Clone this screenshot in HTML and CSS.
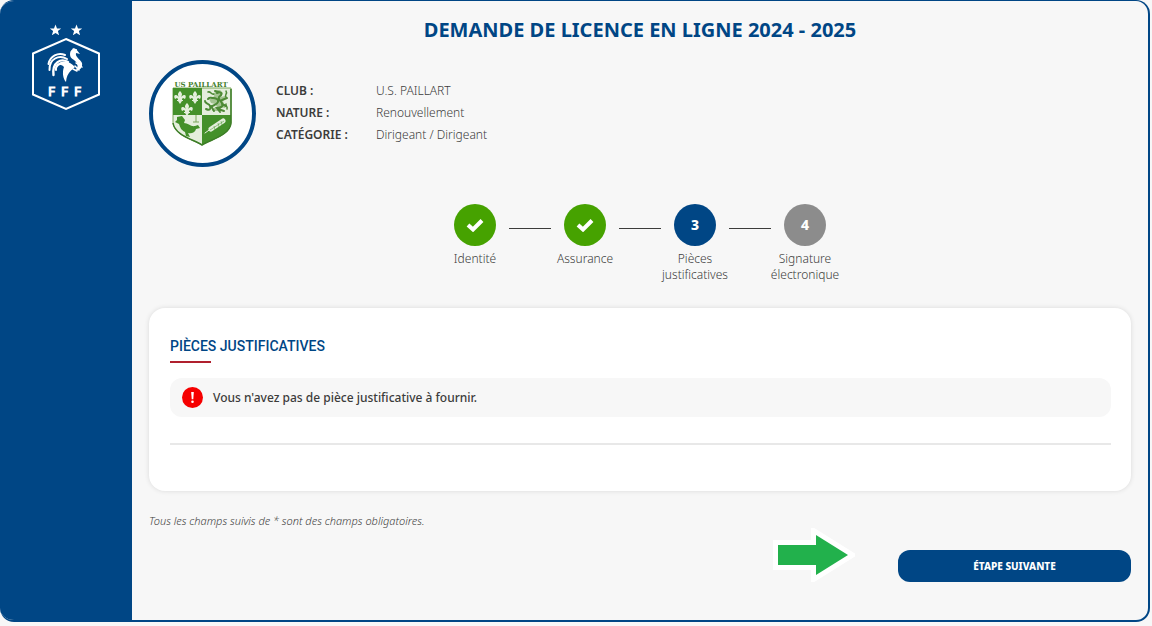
FILE: index.html
```html
<!DOCTYPE html>
<html lang="fr">
<head>
    <meta charset="UTF-8">
    <meta name="viewport" content="width=device-width, initial-scale=1.0">
    <title>Demande de licence en ligne</title>
    <link rel="stylesheet" href="styles.css">
</head>
<body>
<div class="frame">
    <aside class="sidebar">
        <svg class="fff" viewBox="28 22 76 90" role="img" aria-label="FFF">
            <g fill="#fff">
                <path d="M55.500 24.500l1.500 4h4.200l-3.300 2.600 1.200 4.200-3.600-2.400-3.600 2.400 1.200-4.200-3.300-2.600H54z"/>
                <path d="M76.500 24.500l1.500 4h4.200l-3.300 2.600 1.200 4.200-3.600-2.400-3.600 2.400 1.200-4.200-3.300-2.600H75z"/>
            </g>
            <path d="M66 39L99 53.500V94.500L66 109L33 94.500V53.500Z" fill="none" stroke="#fff" stroke-width="2"/>
            <g fill="none" stroke="#fff" stroke-linecap="round">
                <path d="M65 55C58 52 50 56 48.500 64" stroke-width="2"/>
                <path d="M67 59C59 54 49 59 49.500 70" stroke-width="2"/>
                <path d="M68 62C61 58 52 62 53.500 75" stroke-width="2.400"/>
                <path d="M69 64C62 61 55 65 56 70" stroke-width="2"/>
                <path d="M72 53C70 58 77 57 80 63" stroke-width="1.500"/>
                <path d="M75 66L79 70M76 63L82 67M73 69L77 71" stroke-width="1.500"/>
            </g>
            <g fill="#fff">
                <path d="M57 65C62 59 70 61 75 67C72 70 67 72 66 82C63 79 62 72 64 67C61 64 59 65 57 65Z"/>
                <path d="M70 54C70 50 73 48 76 49L80 54L76 53C75 57 80 59 82 63C83 68 79 71 75 71C79 67 78 63 74 60C71 58 70 57 70 54Z"/>
                <path d="M72 49l2-1 1 1 2 0-1 2z"/>
            </g>
            <text class="fff-text" x="48 61 74" y="96">FFF</text>
        </svg>
    </aside>

    <main class="main">
        <h1 class="title">DEMANDE DE LICENCE EN LIGNE 2024 - 2025</h1>

        <section class="club">
            <div class="club-logo">
                <svg viewBox="1 0 66 70" role="img" aria-label="US Paillart">
                    <text class="club-text" x="32" y="8" text-anchor="middle">US PAILLART</text>
                    <path d="M4 9H62V43C62 56 43 60 33 66C23 60 4 56 4 43Z" fill="#e4eedc" stroke="#7ba75b"/>
                    <path d="M4 9H33V36H4Z" fill="#44902a"/>
                    <path d="M33 36H62V43C62 56 43 60 33 66Z" fill="#44902a"/>
                    <path d="M62 10V44C61 56 43 60 33 66C23 60 6 56 4 44" fill="none" stroke="#3d7d27" stroke-width="1.500"/>
                    <g fill="#e4eedc">
                        <path id="lys" d="M11 12c3 3 2 4 1 6 4-4 6-1 4 2-1 0-1-1-2-1-1 1-1 1-1 2h1v1h-1l-2 3-2-3H8v-1h1c0-1 0-1-1-2-1 0-1 1-2 1-2-3 0-6 4-2-1-2-2-3 1-6z"/>
                        <use href="#lys" x="15"/>
                        <use href="#lys" x="7" y="12"/>
                    </g>
                    <path d="M46 12l5-1 3 3-2 4 4-1 2 2-4 3 1 3 3 1-2 3-4-1-3 4-6 0 2-3 3-1-2-3-4-1-2-4 3 0 2-3z" fill="#a3c391"/>
                    <g fill="none" stroke="#4d8a35" stroke-width="2" stroke-linecap="round">
                        <path d="M37 30c4 2 5 0 4-3s-5-2-5-5M42 28c2-2 6-2 7-5s-3-4-5-4M44 19c-3 0-4-1-5 1M48 14c4-2 6 1 3 3s0 4 2 7-1 5-5 5l3 4M53 21l5-2M53 25l4 2M49 30l6 2M42 27l3 5M46 12l4 1"/>
                        <path d="M39 13c3-1 3 3 6 2M57 12c2 3-2 4 0 6M58 30c1-3-2-3-1-5" stroke-width="1.500"/>
                    </g>
                    <path d="M8 38l5-1 3 4-1 3c4 0 7 4 11 3l3-1 2 3-4 1c-1 4-5 5-8 4l2 4-4-1-1-4c-4-2-5-5-6-8l-4-2 2-2z" fill="#44902a"/>
                    <path d="M27 36v7M24 43h6" fill="none" stroke="#7ba75b"/>
                    <g fill="none" stroke="#e4eedc" stroke-linecap="round">
                        <path d="M36 54L43 49"/>
                        <path d="M42 50L54 42" stroke-width="5"/>
                    </g>
                    <path d="M41 51L55 42M45 47l1 4M49 44l1 4M52 42l1 4" stroke="#44902a" stroke-width=".5" fill="none"/>
                </svg>
            </div>
            <dl class="infos">
                <dt>CLUB :</dt>
                <dd>U.S. PAILLART</dd>
                <dt>NATURE :</dt>
                <dd>Renouvellement</dd>
                <dt>CATÉGORIE :</dt>
                <dd>Dirigeant / Dirigeant</dd>
            </dl>
        </section>

        <ol class="steps">
            <li class="step">
                <span class="circle done">
                    <svg width="18" height="14" viewBox="0 0 18 14" aria-hidden="true"><path d="M2 7L7 11.500L16 2.500" fill="none" stroke="#fff" stroke-width="4"/></svg>
                </span>
                <span class="label">Identité</span>
            </li>
            <li class="line" aria-hidden="true"></li>
            <li class="step">
                <span class="circle done">
                    <svg width="18" height="14" viewBox="0 0 18 14" aria-hidden="true"><path d="M2 7L7 11.500L16 2.500" fill="none" stroke="#fff" stroke-width="4"/></svg>
                </span>
                <span class="label">Assurance</span>
            </li>
            <li class="line" aria-hidden="true"></li>
            <li class="step" aria-current="step">
                <span class="circle current">3</span>
                <span class="label">Pièces<br>justificatives</span>
            </li>
            <li class="line" aria-hidden="true"></li>
            <li class="step">
                <span class="circle">4</span>
                <span class="label">Signature<br>électronique</span>
            </li>
        </ol>

        <section class="card">
            <h2 class="card-title">PIÈCES JUSTIFICATIVES</h2>
            <div class="alert">
                <svg width="21" height="21" viewBox="0 0 21 21" aria-hidden="true">
                    <circle cx="10.500" cy="10.500" r="10.500" fill="#f60000"/>
                    <path d="M9.200 5h2.600l-.5 7.200H9.700z" fill="#fff"/>
                    <circle cx="10.500" cy="14.800" r="1.300" fill="#fff"/>
                </svg>
                <p>Vous n'avez pas de pièce justificative à fournir.</p>
            </div>
            <hr class="separator">
        </section>

        <p class="note">Tous les champs suivis de * sont des champs obligatoires.</p>

        <div class="actions">
            <svg class="arrow" width="82" height="54" viewBox="0 0 82 54" aria-hidden="true">
                <path d="M5 17H43V7L75 27L43 47V37H5Z" fill="#fff" stroke="#fff" stroke-width="10"/>
                <path d="M5 17H43V7L75 27L43 47V37H5Z" fill="#22b14c"/>
            </svg>
            <button type="button" class="btn">ÉTAPE SUIVANTE</button>
        </div>
    </main>
</div>
</body>
</html>
```
FILE: styles.css
```css
*{
    box-sizing: border-box;
}
body{
    margin: 0;
    background-color: #f7f7f7;
    color: #3c3c3b;
    font-family: "Noto Sans", "Open Sans", sans-serif;
    font-size: 12px;
    font-weight: 300;
    line-height: 16px;
}
h1, h2, p, dl, dd, ol{
    margin: 0;
    padding: 0;
}
.frame{
    display: flex;
    min-height: calc(100vh - 4px);
    margin-right: 2px;
    border: 2px solid #004685;
    border-width: 1px 2px 2px 0;
    border-radius: 14px;
    background-color: #f7f7f7;
    overflow: hidden;
}
.sidebar{
    flex: 0 0 132px;
    padding-top: 21px;
    background-color: #004685;
    text-align: center;
}
.fff{
    width: 76px;
    height: 90px;
}
.fff-text{
    fill: #fff;
    stroke: #fff;
    stroke-width: 1px;
    font: 13px "DejaVu Sans", sans-serif;
}
.main{
    flex: 1;
    padding: 15px 17px 38px;
}
.title{
    color: #004685;
    font-size: 20px;
    font-weight: 700;
    line-height: 28px;
    text-align: center;
}
.club{
    display: flex;
    align-items: center;
    gap: 20px;
    margin-top: 16px;
}
.club-logo{
    display: flex;
    justify-content: center;
    align-items: center;
    width: 107px;
    height: 107px;
    border: 4px solid #004685;
    border-radius: 50%;
    background-color: #fff;
}
.club-logo svg{
    width: 66px;
    height: 70px;
}
.club-text{
    fill: #44802e;
    font: bold 7px "DejaVu Serif", serif;
}
.infos{
    display: grid;
    grid-template-columns: 100px auto;
    padding-bottom: 2px;
    line-height: 22px;
}
.infos dt{
    font-weight: 600;
}
.steps{
    display: flex;
    justify-content: center;
    margin-top: 37px;
    list-style: none;
}
.step{
    display: flex;
    flex-direction: column;
    align-items: center;
    gap: 5px;
    width: 68px;
}
.circle{
    display: flex;
    justify-content: center;
    align-items: center;
    width: 42px;
    height: 42px;
    border-radius: 50%;
    background-color: #8c8c8c;
    color: #fff;
    font-size: 14px;
    font-weight: 800;
}
.done{
    background-color: #46a200;
}
.current{
    background-color: #004685;
}
.label{
    text-align: center;
    white-space: nowrap;
}
.line{
    width: 42px;
    height: 25px;
    border-bottom: 1px solid #3c3c3b;
}
.card{
    margin-top: 25px;
    padding: 24px 20px 46px 21px;
    border-radius: 16px;
    background-color: #fff;
    box-shadow: 0 0 5px rgba(0, 0, 0, 0.12);
}
.card-title{
    color: #004685;
    font-family: Roboto, "Noto Sans", sans-serif;
    font-size: 14px;
    font-weight: 500;
    line-height: 29px;
}
.card-title::after{
    content: "";
    display: block;
    width: 41px;
    height: 2px;
    background-color: #b0202e;
}
.alert{
    display: flex;
    align-items: center;
    gap: 10px;
    margin-top: 15px;
    padding: 9px 12px;
    border-radius: 12px;
    background-color: #f7f7f7;
    font-weight: 500;
}
.separator{
    height: 2px;
    margin: 26px 0 0;
    border: 0;
    background-color: #e8e8e8;
}
.note{
    margin-top: 23px;
    font-size: 11px;
    font-style: italic;
    line-height: 14px;
}
.actions{
    display: flex;
    justify-content: flex-end;
    align-items: flex-end;
    gap: 43px;
}
.btn{
    width: 233px;
    height: 32px;
    border: 0;
    border-radius: 12px;
    background-color: #004685;
    color: #fff;
    font-family: inherit;
    font-size: 10px;
    font-weight: 800;
    cursor: pointer;
}
```
